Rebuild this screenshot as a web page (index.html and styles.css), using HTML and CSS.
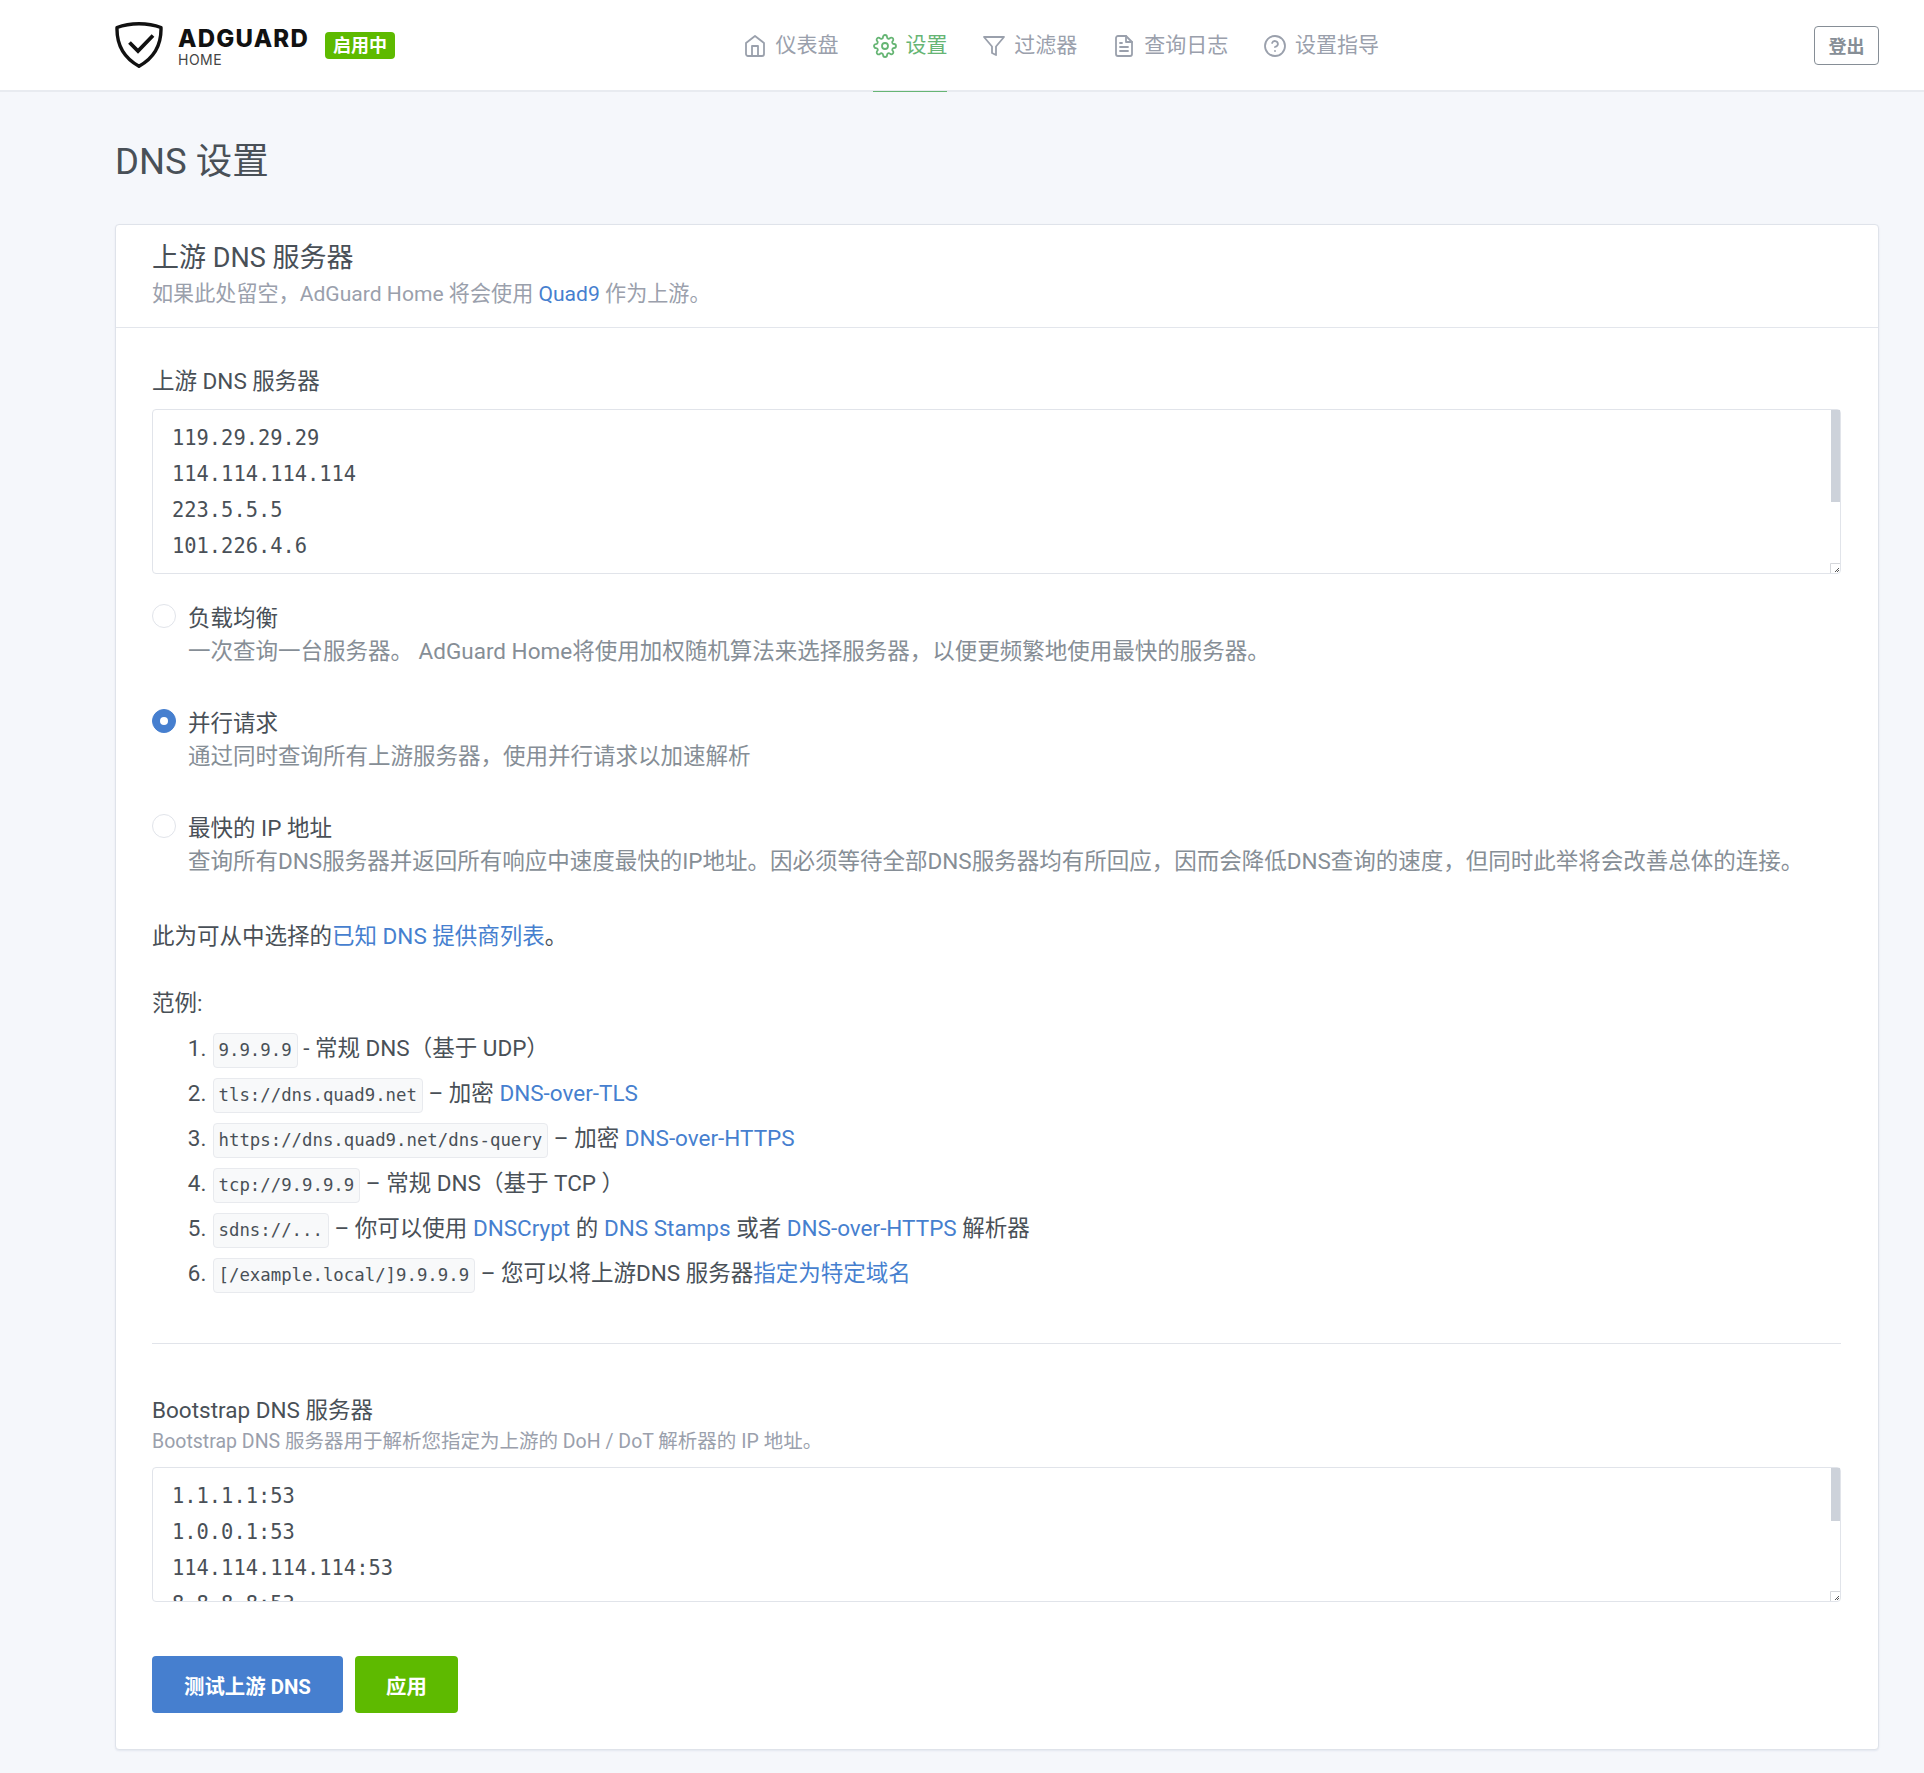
FILE: index.html
```html
<!DOCTYPE html>
<html lang="zh-CN">
<head>
<meta charset="utf-8">
<title>DNS 设置</title>
<link rel="stylesheet" href="styles.css">
</head>
<body>
<header class="topbar">
  <a class="brand" href="#">
    <svg class="shield" viewBox="0 0 48 46" fill="none" stroke="#111" stroke-width="3.4" stroke-linejoin="round" stroke-linecap="round"><path d="M2 5.5C9 2.8 16 1.7 24 1.7S39 2.8 46 5.5C46.5 24 39 36 24 44.3 9 36 1.5 24 2 5.5Z"/><path d="M14.5 20.5 23 29 38 13.5" stroke-width="3.8" stroke-linecap="butt" stroke-linejoin="miter"/></svg>
    <span class="brand-text"><span class="brand-name">ADGUARD</span><span class="brand-sub">HOME</span></span>
    <span class="badge">启用中</span>
  </a>
  <nav class="nav">
    <a class="nav-item" href="#"><svg class="ico" viewBox="0 0 24 24"><path d="M3 9l9-7 9 7v11a2 2 0 0 1-2 2H5a2 2 0 0 1-2-2z"/><polyline points="9 22 9 12 15 12 15 22"/></svg>仪表盘</a>
    <a class="nav-item active" href="#"><svg class="ico" viewBox="0 0 24 24"><circle cx="12" cy="12" r="3"/><path d="M19.4 15a1.65 1.65 0 0 0 .33 1.82l.06.06a2 2 0 0 1 0 2.83 2 2 0 0 1-2.83 0l-.06-.06a1.65 1.65 0 0 0-1.82-.33 1.65 1.65 0 0 0-1 1.51V21a2 2 0 0 1-2 2 2 2 0 0 1-2-2v-.09A1.65 1.65 0 0 0 9 19.4a1.65 1.65 0 0 0-1.82.33l-.06.06a2 2 0 0 1-2.83 0 2 2 0 0 1 0-2.83l.06-.06a1.65 1.65 0 0 0 .33-1.82 1.65 1.65 0 0 0-1.51-1H3a2 2 0 0 1-2-2 2 2 0 0 1 2-2h.09A1.65 1.65 0 0 0 4.6 9a1.65 1.65 0 0 0-.33-1.82l-.06-.06a2 2 0 0 1 0-2.83 2 2 0 0 1 2.83 0l.06.06a1.65 1.65 0 0 0 1.82.33H9a1.65 1.65 0 0 0 1-1.51V3a2 2 0 0 1 2-2 2 2 0 0 1 2 2v.09a1.65 1.65 0 0 0 1 1.51 1.65 1.65 0 0 0 1.82-.33l.06-.06a2 2 0 0 1 2.83 0 2 2 0 0 1 0 2.83l-.06.06a1.65 1.65 0 0 0-.33 1.82V9a1.65 1.65 0 0 0 1.51 1H21a2 2 0 0 1 2 2 2 2 0 0 1-2 2h-.09a1.65 1.65 0 0 0-1.51 1z"/></svg>设置</a>
    <a class="nav-item" href="#"><svg class="ico" viewBox="0 0 24 24"><polygon points="22 3 2 3 10 12.46 10 19 14 21 14 12.46 22 3"/></svg>过滤器</a>
    <a class="nav-item" href="#"><svg class="ico" viewBox="0 0 24 24"><path d="M14 2H6a2 2 0 0 0-2 2v16a2 2 0 0 0 2 2h12a2 2 0 0 0 2-2V8z"/><polyline points="14 2 14 8 20 8"/><line x1="16" y1="13" x2="8" y2="13"/><line x1="16" y1="17" x2="8" y2="17"/><polyline points="10 9 9 9 8 9"/></svg>查询日志</a>
    <a class="nav-item" href="#"><svg class="ico" viewBox="0 0 24 24"><circle cx="12" cy="12" r="10"/><path d="M9.09 9a3 3 0 0 1 5.83 1c0 2-3 3-3 3"/><line x1="12" y1="17" x2="12.01" y2="17"/></svg>设置指导</a>
  </nav>
  <button class="logout" type="button">登出</button>
</header>

<main class="page">
  <h1 class="page-title">DNS 设置</h1>
  <section class="card">
    <div class="card-header">
      <h2 class="card-title">上游 DNS 服务器</h2>
      <p class="card-sub">如果此处留空，AdGuard Home 将会使用 <a href="#">Quad9</a> 作为上游。</p>
    </div>
    <form class="card-body">
      <label class="field-label" for="upstream">上游 DNS 服务器</label>
      <div class="ta-wrap">
        <textarea id="upstream" class="dns-input dns-upstream" spellcheck="false">119.29.29.29
114.114.114.114
223.5.5.5
101.226.4.6
180.76.76.76
8.8.8.8
</textarea>
        <span class="thumb thumb-upstream"></span>
        <svg class="grip" viewBox="0 0 10 10"><path class="grip-box" d="M.5 10V.5H10"/><path class="grip-dots" d="M8 5h1v1H8zM7 6h1v1H7zM6 7h1v1H6zM5 8h1v1H5zM8 7h1v1H8zM7 8h1v1H7z"/></svg>
      </div>

      <div class="radios">
        <div class="radio-row">
          <span class="radio"></span>
          <div><div class="radio-label">负载均衡</div><div class="radio-desc">一次查询一台服务器。 AdGuard Home将使用加权随机算法来选择服务器，以便更频繁地使用最快的服务器。</div></div>
        </div>
        <div class="radio-row">
          <span class="radio checked"></span>
          <div><div class="radio-label">并行请求</div><div class="radio-desc">通过同时查询所有上游服务器，使用并行请求以加速解析</div></div>
        </div>
        <div class="radio-row">
          <span class="radio"></span>
          <div><div class="radio-label">最快的 IP 地址</div><div class="radio-desc">查询所有DNS服务器并返回所有响应中速度最快的IP地址。因必须等待全部DNS服务器均有所回应，因而会降低DNS查询的速度，但同时此举将会改善总体的连接。</div></div>
        </div>
      </div>

      <p class="known">此为可从中选择的<a href="#">已知 DNS 提供商列表</a>。</p>
      <p class="examples-title">范例:</p>
      <ol class="examples">
        <li><code>9.9.9.9</code> - 常规 DNS（基于 UDP）</li>
        <li><code>tls://dns.quad9.net</code> – 加密 <a href="#">DNS-over-TLS</a></li>
        <li><code>https://dns.quad9.net/dns-query</code> – 加密 <a href="#">DNS-over-HTTPS</a></li>
        <li><code>tcp://9.9.9.9</code> – 常规 DNS（基于 TCP ）</li>
        <li><code>sdns://...</code> – 你可以使用 <a href="#">DNSCrypt</a> 的 <a href="#">DNS Stamps</a> 或者 <a href="#">DNS-over-HTTPS</a> 解析器</li>
        <li><code>[/example.local/]9.9.9.9</code> – 您可以将上游DNS 服务器<a href="#">指定为特定域名</a></li>
      </ol>
      <hr class="divider">
      <label class="field-label boot-label" for="bootstrap">Bootstrap DNS 服务器</label>
      <p class="help">Bootstrap DNS 服务器用于解析您指定为上游的 DoH / DoT 解析器的 IP 地址。</p>
      <div class="ta-wrap">
        <textarea id="bootstrap" class="dns-input dns-bootstrap" spellcheck="false">1.1.1.1:53
1.0.0.1:53
114.114.114.114:53
8.8.8.8:53
8.8.4.4:53
223.5.5.5:53
119.29.29.29:53
</textarea>
        <span class="thumb thumb-bootstrap"></span>
        <svg class="grip" viewBox="0 0 10 10"><path class="grip-box" d="M.5 10V.5H10"/><path class="grip-dots" d="M8 5h1v1H8zM7 6h1v1H7zM6 7h1v1H6zM5 8h1v1H5zM8 7h1v1H8zM7 8h1v1H7z"/></svg>
      </div>
      <div class="actions">
        <button class="btn btn-blue" type="button">测试上游 DNS</button>
        <button class="btn btn-green" type="button">应用</button>
      </div>
    </form>
  </section>
</main>
</body>
</html>
```

FILE: styles.css
```css
* { box-sizing: border-box; }
html, body { margin: 0; padding: 0; }
body {
  background: #f5f7fb;
  color: #495057;
  font-family: Roboto, "Noto Sans CJK SC", sans-serif;
  font-size: 22.5px;
  line-height: 1.5;
  min-height: 1773px;
}
a { color: #467fcf; text-decoration: none; }

.topbar {
  position: relative;
  height: 92px;
  background: #fff;
  border-bottom: 2px solid #e8ebf0;
  padding: 0 45px 0 115px;
  display: flex;
  align-items: center;
}
.brand { display: flex; align-items: center; color: #111; }
.shield { width: 48px; height: 46px; flex: none; }
.brand-text { display: flex; flex-direction: column; margin-left: 15px; width: 131px; padding-top: 4px; }
.brand-name { font-family: Inter, sans-serif; font-weight: 800; font-size: 24px; line-height: 26px; color: #111; letter-spacing: 1.2px; }
.brand-sub { font-family: Inter, sans-serif; font-size: 14px; line-height: 16px; color: #444; letter-spacing: .5px; }
.badge {
  margin-left: 16px;
  width: 70px;
  height: 27px;
  background: #5eba00;
  color: #fff;
  border-radius: 4px;
  font-size: 18px;
  font-weight: 700;
  line-height: 27px;
  text-align: center;
}
.nav { position: absolute; left: 743px; top: 0; height: 92px; display: flex; gap: 34.4px; }
.nav-item {
  height: 92px;
  display: flex;
  align-items: center;
  gap: 8.5px;
  color: #9aa0ac;
  font-size: 21px;
  border-bottom: 1px solid transparent;
}
.nav-item.active { color: #66b574; border-bottom-color: #66b574; }
.ico { width: 24px; height: 24px; fill: none; stroke: currentColor; stroke-width: 1.8; stroke-linecap: round; stroke-linejoin: round; flex: none; }
.logout {
  margin-left: auto;
  width: 65px;
  height: 39px;
  background: #fff;
  border: 1px solid #868e96;
  border-radius: 4px;
  color: #868e96;
  font: 700 18px Roboto, "Noto Sans CJK SC", sans-serif;
  padding: 0;
}

.page { padding: 0 45px 0 115px; }
.page-title { margin: 0; height: 132px; line-height: 140px; font-size: 36.5px; font-weight: 400; color: #495057; }
.card {
  background: #fff;
  border: 1px solid #dfe3ea;
  border-radius: 4px;
  box-shadow: 0 1px 2px rgba(0, 40, 100, .08);
  height: 1526px;
}
.card-header { height: 103px; border-bottom: 1px solid #e3e6ec; padding: 15px 36px 0; }
.card-title { margin: 0; font-size: 27px; line-height: 36px; font-weight: 400; color: #495057; }
.card-sub { margin: 0; font-size: 21.1px; line-height: 35px; color: #9aa0ac; }
.card-body { padding: 35px 37px 0 36px; display: flex; flex-direction: column; }
.field-label { display: block; line-height: 36px; margin-bottom: 10px; color: #495057; }
.ta-wrap { position: relative; }
.dns-input {
  display: block;
  width: 100%;
  border: 1px solid #e1e4ea;
  border-radius: 4px;
  padding: 10px 18px 0 19px;
  background: #fff;
  color: #495057;
  font-family: "DejaVu Sans Mono", monospace;
  font-size: 20.4px;
  line-height: 36px;
  outline: none;
  resize: none;
  overflow: hidden;
}
.dns-upstream { height: 165px; }
.dns-bootstrap { height: 135px; }
.thumb { position: absolute; top: 1px; right: 1px; width: 9px; background: #cdd2da; }
.thumb-upstream { height: 92px; }
.thumb-bootstrap { height: 53px; }
.grip { position: absolute; right: 1px; bottom: 1px; width: 10px; height: 10px; }
.grip-box { fill: none; stroke: #d5d7db; stroke-width: 1; }
.grip-dots { fill: #555; }

.radios { margin-top: 26px; display: flex; flex-direction: column; gap: 39px; }
.radio-row { display: flex; gap: 12px; align-items: flex-start; }
.radio { flex: none; width: 24px; height: 24px; margin-top: 4px; border: 1px solid #e1e4ea; border-radius: 50%; background: #fff; }
.radio.checked { background: #467fcf; border-color: #467fcf; position: relative; }
.radio.checked::after { content: ""; position: absolute; left: 7px; top: 7px; width: 8px; height: 8px; border-radius: 50%; background: #fff; }
.radio-label { line-height: 36px; color: #495057; }
.radio-desc { line-height: 30px; color: #868e96; }

.known { margin: 42px 0 0; line-height: 36px; }
.examples-title { margin: 31px 0 0; line-height: 36px; }
.examples { margin: 5px 0 0; padding: 0 0 0 37px; list-style-position: outside; }
.examples li { height: 45px; line-height: 45px; padding-left: 1px; margin-left: 23px; }
code {
  display: inline-block;
  font-family: "DejaVu Sans Mono", monospace;
  font-size: 17.35px;
  line-height: 33px;
  height: 35px;
  padding: 0 5px 0 4.5px;
  background: #f8f9fa;
  border: 1px solid #e8eaee;
  border-radius: 4px;
  vertical-align: middle;
  color: #495057;
}
.divider { width: 100%; margin: 47px 0 0; border: 0; border-top: 1px solid #e1e4ea; }
.boot-label { margin: 48px 0 0; }
.help { margin: 0 0 11px; font-size: 19.5px; line-height: 28px; color: #9aa0ac; }
.actions { display: flex; gap: 12px; margin-top: 54px; }
.btn {
  height: 57px;
  border: 0;
  border-radius: 4px;
  color: #fff;
  font: 700 20.4px Roboto, "Noto Sans CJK SC", sans-serif;
  padding: 0;
}
.btn-blue { width: 191px; background: #467fcf; }
.btn-green { width: 103px; background: #5eba00; }
```
